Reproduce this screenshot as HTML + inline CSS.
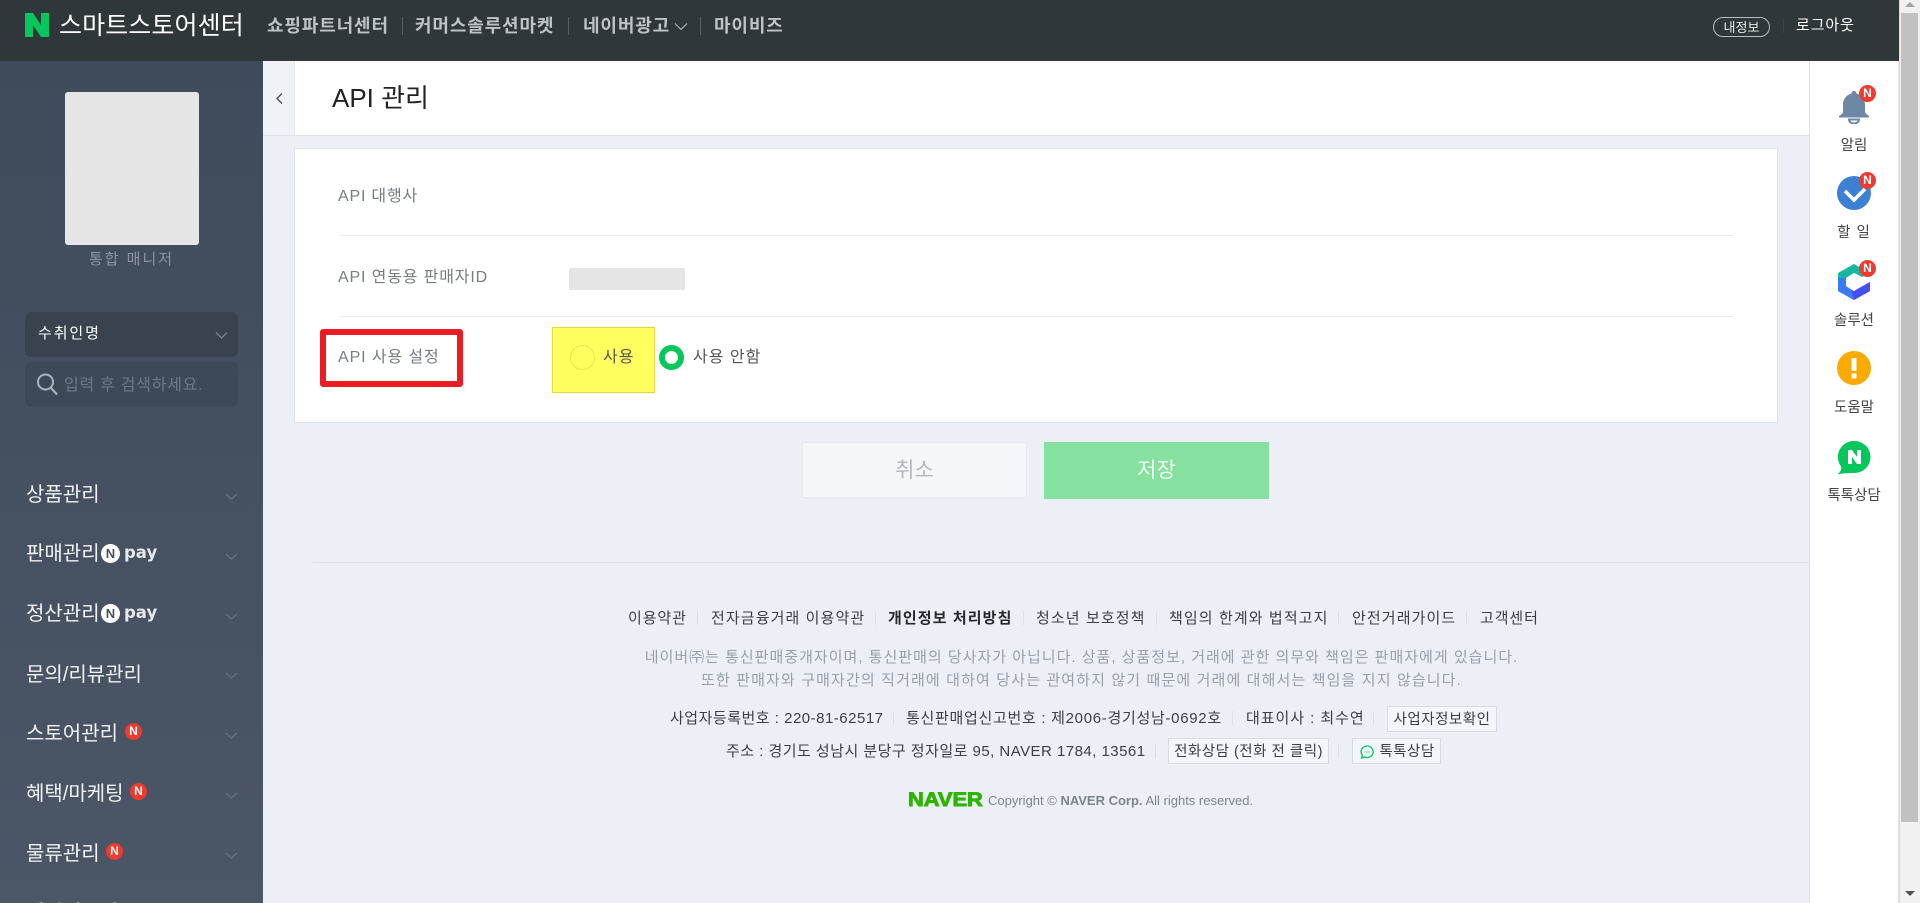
<!DOCTYPE html>
<html lang="ko"><head><meta charset="utf-8"><title>API 관리</title>
<style>
html,body{margin:0;padding:0;width:1920px;height:903px;overflow:hidden;background:#ecf0f6}
body{position:relative;font-family:"Liberation Sans","Noto Sans CJK KR",sans-serif}
.a,.t,svg{position:absolute}
.t{white-space:nowrap;line-height:0;height:0}
.c{text-align:center}
.nav{font-size:18px;font-weight:700;color:#bfc3c7;letter-spacing:.85px;top:26px}
.sep{position:absolute;width:1px}
.m{left:26px;font-size:20px;color:#fff;opacity:.93}
.d{left:0;width:263px;height:1px;background:#5a6576}
.lb{left:338px;font-size:16px;color:#777c82}
.f{font-size:15px;color:#3c4046;letter-spacing:1.1px;top:619px}
.n{font-size:15px;color:#989fa9;left:313px;width:1537px;text-align:center}
.fs{height:14px;background:#dde1e7}
.fb{position:absolute;box-sizing:border-box;background:#f2f5f9;border:1px solid #d8dce2;height:26px;font-size:14.5px;color:#3c4046;line-height:26px;text-align:center;white-space:nowrap;letter-spacing:.5px}
.r{font-size:14.5px;color:#444;width:90px;left:1809px;text-align:center}
.badge{position:absolute;width:17px;height:17px;border-radius:50%;background:#f0392f;color:#fff;font:bold 12px/17px "Liberation Sans",sans-serif;text-align:center}
</style></head><body>

<!-- header -->
<div class="a" style="left:0;top:0;width:1899px;height:61px;background:#2f373b"></div>
<svg style="left:25px;top:13px" width="24" height="24" viewBox="0 0 24 24"><path d="M0 0h8l8 12V0h8v24h-8L8 12v12H0z" fill="#03c75a"/></svg>
<div class="t" style="left:59px;top:26px;font-size:25px;letter-spacing:.1px;color:#fff">스마트스토어센터</div>
<div class="t nav" style="left:267px">쇼핑파트너센터</div>
<div class="sep" style="left:402px;top:17px;height:18px;background:#596064"></div>
<div class="t nav" style="left:415px">커머스솔루션마켓</div>
<div class="sep" style="left:568px;top:17px;height:18px;background:#596064"></div>
<div class="t nav" style="left:583px">네이버광고</div>
<svg style="left:674px;top:22px" width="14" height="9" viewBox="0 0 14 9"><path d="M1 1.500l6 6 6-6" fill="none" stroke="#b5b9bd" stroke-width="1.100"/></svg>
<div class="sep" style="left:700px;top:17px;height:18px;background:#596064"></div>
<div class="t nav" style="left:714px">마이비즈</div>
<div class="a" style="left:1713px;top:17px;width:57px;height:20px;box-sizing:border-box;border:1px solid #b9bdc0;border-radius:10px;color:#e8eaeb;font-size:13px;line-height:19px;text-align:center">내정보</div>
<div class="sep" style="left:1783px;top:19px;height:14px;background:#3d4448"></div>
<div class="t" style="left:1796px;top:26px;font-size:15px;letter-spacing:.9px;color:#fff">로그아웃</div>

<!-- scrollbar -->
<div class="a" style="left:1899px;top:0;width:21px;height:903px;background:#f1f1f1;border-left:1px solid #dcdcdc;box-sizing:border-box"></div>
<div class="a" style="left:1901px;top:13px;width:17px;height:809px;background:#c1c1c1"></div>
<svg style="left:1904px;top:0" width="12" height="9" viewBox="0 0 12 9"><path d="M6 2l5 5H1z" fill="#a3a3a3"/></svg>
<svg style="left:1904px;top:889px" width="12" height="9" viewBox="0 0 12 9"><path d="M1 2h10L6 7z" fill="#505050"/></svg>

<!-- sidebar -->
<div class="a" style="left:0;top:61px;width:263px;height:842px;background:linear-gradient(#3f4b5b,#4b5666)"></div>
<div class="a" style="left:65px;top:92px;width:134px;height:153px;background:#e5e5e5;border-radius:3px"></div>
<div class="t c" style="left:0;width:263px;top:260px;font-size:15px;letter-spacing:2px;color:#8c95a1">통합 매니저</div>
<div class="a" style="left:25px;top:312px;width:213px;height:45px;background:#394350;border-radius:6px"></div>
<div class="t" style="left:38px;top:334px;font-size:15px;letter-spacing:1.9px;color:#fff">수취인명</div>
<svg style="left:215px;top:331px" width="13" height="9" viewBox="0 0 13 9"><path d="M1 1.500l5.500 5.500 5.500-5.500" fill="none" stroke="#7a8492" stroke-width="1.300"/></svg>
<div class="a" style="left:25px;top:362px;width:213px;height:45px;background:#3e4958;border-radius:6px"></div>
<svg style="left:36px;top:372px" width="22" height="24" viewBox="0 0 22 24"><circle cx="9.500" cy="10" r="7.500" fill="none" stroke="#aab2bc" stroke-width="2"/><path d="M15 16l6 6.500" stroke="#aab2bc" stroke-width="2.200"/></svg>
<div class="t" style="left:64px;top:386px;font-size:16px;letter-spacing:.75px;color:#6e7887">입력 후 검색하세요.</div>
<div class="d" style="top:445px"></div>

<div class="t m" style="top:495px">상품관리</div>
<div class="d" style="top:524px;background:#525d6e"></div>
<div class="t m" style="top:554px">판매관리</div>
<div class="a" style="left:101px;top:544px;width:19px;height:19px;border-radius:50%;background:#fff;color:#465162;font:bold 13px/19px 'Liberation Sans',sans-serif;text-align:center">N</div>
<div class="t" style="left:124px;top:553px;font:bold 16.500px 'DejaVu Sans',sans-serif;line-height:0;color:#e6e8eb">pay</div>
<div class="d" style="top:584px;background:#525d6e"></div>
<div class="t m" style="top:614px">정산관리</div>
<div class="a" style="left:101px;top:604px;width:19px;height:19px;border-radius:50%;background:#fff;color:#465162;font:bold 13px/19px 'Liberation Sans',sans-serif;text-align:center">N</div>
<div class="t" style="left:124px;top:613px;font:bold 16.500px 'DejaVu Sans',sans-serif;line-height:0;color:#e6e8eb">pay</div>
<div class="d" style="top:704px;background:#525d6e"></div>
<div class="d" style="top:644px;background:#525d6e"></div>
<div class="t m" style="top:675px">문의/리뷰관리</div>
<div class="t m" style="top:734px">스토어관리</div>
<div class="badge" style="left:125px;top:723px">N</div>
<div class="d" style="top:763px;background:#525d6e"></div>
<div class="t m" style="top:794px">혜택/마케팅</div>
<div class="badge" style="left:130px;top:783px">N</div>
<div class="d" style="top:823px;background:#525d6e"></div>
<div class="t m" style="top:854px">물류관리</div>
<div class="badge" style="left:106px;top:843px">N</div>
<div class="d" style="top:883px;background:#525d6e"></div>
<div class="t m" style="top:913px">데이터분석</div>
<svg style="left:225px;top:491px" width="13" height="400" viewBox="0 0 13 400" fill="none" stroke="#667182" stroke-width="1.300">
<path d="M1 3l5.500 5 5.500-5M1 63l5.500 5 5.500-5M1 123l5.500 5 5.500-5M1 182l5.500 5 5.500-5M1 242l5.500 5 5.500-5M1 302l5.500 5 5.500-5M1 362l5.500 5 5.500-5"/></svg>

<!-- title bar -->
<div class="a" style="left:263px;top:61px;width:31px;height:74px;background:#eff2f7;border-right:1px solid #e4e7ec"></div>
<div class="a" style="left:295px;top:61px;width:1514px;height:74px;background:#fff"></div>
<div class="a" style="left:263px;top:135px;width:1546px;height:1px;background:#dde0e5"></div>
<svg style="left:275px;top:92px" width="9" height="13" viewBox="0 0 9 13"><path d="M7 1.500L2 6.500l5 5" fill="none" stroke="#555" stroke-width="1.500"/></svg>
<div class="t" style="left:332px;top:98px;font-size:26px;color:#222">API 관리</div>

<!-- right panel -->
<div class="a" style="left:1809px;top:61px;width:90px;height:842px;background:#fff;border-left:1px solid #dfe2e6;border-right:1px solid #dfe2e6;box-sizing:border-box"></div>
<svg style="left:1838px;top:90px" width="32" height="34" viewBox="0 0 32 34"><path d="M16 1c1.500 0 2.500 1 2.500 2.500 5.500 1.500 8.500 6 8.500 11v7c0 2 2 3 4 4.500v1.500H1v-1.500c2-1.500 4-2.500 4-4.500v-7c0-5 3-9.500 8.500-11C13.500 2 14.500 1 16 1z" fill="#6c88a4"/><path d="M11 29.500a5 4 0 0 0 10 0z" fill="none" stroke="#6c88a4" stroke-width="2"/></svg>
<div class="badge" style="left:1859px;top:85px">N</div>
<div class="t r" style="top:146px">알림</div>

<svg style="left:1837px;top:176px" width="34" height="34" viewBox="0 0 34 34"><circle cx="17" cy="17" r="17" fill="#3c80d3"/><path d="M8 15l9 9 11-11" fill="none" stroke="#fff" stroke-width="3.500"/></svg>
<div class="badge" style="left:1859px;top:172px">N</div>
<div class="t r" style="top:233px;letter-spacing:1px">할 일</div>

<svg style="left:1838px;top:264px" width="32" height="36" viewBox="0 0 32 36">
<path d="M16 0L0 9v9l8 4v-8l8-5 8 4 8-4z" fill="#16b8a2"/>
<path d="M0 14l8-0v13l8 3 0 6L0 27z" fill="#3b7bf0"/>
<path d="M8 22l8 5 16-9v9l-16 9-16-9V15z" fill="#3b7bf0"/>
<path d="M32 18v9l-16 9v0l-2-8z" fill="#4a4df0"/>
<path d="M16 9l8 4-0 1-8 5v0l7 3.500-7 4.500-8-5v-8z" fill="#fff"/></svg>
<div class="badge" style="left:1859px;top:260px">N</div>
<div class="t r" style="top:321px">솔루션</div>

<svg style="left:1837px;top:351px" width="34" height="34" viewBox="0 0 34 34"><circle cx="17" cy="17" r="17" fill="#f9ab00"/><rect x="14.500" y="7" width="5" height="13" rx="1" fill="#fff"/><rect x="14.500" y="22.500" width="5" height="5" rx="1" fill="#fff"/></svg>
<div class="t r" style="top:408px">도움말</div>

<svg style="left:1837px;top:440px" width="34" height="35" viewBox="0 0 34 35"><path d="M17.500 1a16 16 0 0 1 0 32c-5 0-9-.5-17 1.500 3-3 4.500-5.500 3.500-8A16 16 0 0 1 17.500 1z" fill="#03c75a"/><path d="M11 10h4l5 7v-7h4v14h-4l-5-7v7h-4z" fill="#fff"/></svg>
<div class="t r" style="top:496px">톡톡상담</div>

<!-- card -->
<div class="a" style="left:294px;top:148px;width:1484px;height:275px;box-sizing:border-box;background:#fff;border:1px solid #dfe3e8"></div>
<div class="t lb" style="top:197px;letter-spacing:.8px">API 대행사</div>
<div class="a" style="left:340px;top:235px;width:1393px;height:1px;background:#e8e9eb"></div>
<div class="t lb" style="top:278px;letter-spacing:.85px">API 연동용 판매자ID</div>
<div class="a" style="left:569px;top:268px;width:116px;height:22px;background:#e5e5e5;border-radius:2px"></div>
<div class="a" style="left:340px;top:316px;width:1393px;height:1px;background:#e8e9eb"></div>
<div class="a" style="left:320px;top:329px;width:143px;height:58px;box-sizing:border-box;border:6px solid #ed1c24;border-radius:3px"></div>
<div class="t lb" style="top:358px;letter-spacing:.9px">API 사용 설정</div>
<div class="a" style="left:552px;top:327px;width:103px;height:66px;box-sizing:border-box;background:#ffff60;border:1px solid #e8d83c"></div>
<div class="a" style="left:570px;top:345px;width:25px;height:25px;box-sizing:border-box;border:1px solid #e6e650;border-radius:50%"></div>
<div class="t" style="left:603px;top:358px;font-size:16px;letter-spacing:1px;color:#555">사용</div>
<div class="a" style="left:659px;top:345px;width:25px;height:25px;box-sizing:border-box;border:6.500px solid #03c75a;border-radius:50%;background:#fff"></div>
<div class="t" style="left:693px;top:358px;font-size:16px;letter-spacing:1px;color:#555">사용 안함</div>

<!-- buttons -->
<div class="a" style="left:802px;top:442px;width:225px;height:56px;box-sizing:border-box;background:#f4f6fa;border:1px solid #e6e9ee;color:#b4b8bd;font-size:21px;line-height:55px;text-align:center">취소</div>
<div class="a" style="left:1044px;top:442px;width:225px;height:57px;background:#86e09f;color:#f2fbf4;font-size:21px;line-height:57px;text-align:center">저장</div>

<!-- footer -->
<div class="a" style="left:313px;top:562px;width:1496px;height:1px;background:#dfe2e7"></div>
<div class="t f" style="left:628px;letter-spacing:.9px">이용약관</div>
<div class="sep fs" style="left:697px;top:611px"></div>
<div class="t f" style="left:711px">전자금융거래 이용약관</div>
<div class="sep fs" style="left:875px;top:611px"></div>
<div class="t f" style="left:888px;font-weight:700;color:#25282c">개인정보 처리방침</div>
<div class="sep fs" style="left:1023px;top:611px"></div>
<div class="t f" style="left:1036px">청소년 보호정책</div>
<div class="sep fs" style="left:1156px;top:611px"></div>
<div class="t f" style="left:1169px">책임의 한계와 법적고지</div>
<div class="sep fs" style="left:1338px;top:611px"></div>
<div class="t f" style="left:1352px">안전거래가이드</div>
<div class="sep fs" style="left:1466px;top:611px"></div>
<div class="t f" style="left:1480px;letter-spacing:.9px">고객센터</div>

<div class="t n" style="top:658px;letter-spacing:1px">네이버㈜는 통신판매중개자이며, 통신판매의 당사자가 아닙니다. 상품, 상품정보, 거래에 관한 의무와 책임은 판매자에게 있습니다.</div>
<div class="t n" style="top:681px;letter-spacing:1.13px">또한 판매자와 구매자간의 직거래에 대하여 당사는 관여하지 않기 때문에 거래에 대해서는 책임을 지지 않습니다.</div>

<div class="t f" style="left:670px;top:719px;letter-spacing:.5px">사업자등록번호 : 220-81-62517</div>
<div class="sep fs" style="left:893px;top:711px"></div>
<div class="t f" style="left:906px;top:719px;letter-spacing:.7px">통신판매업신고번호 : 제2006-경기성남-0692호</div>
<div class="sep fs" style="left:1232px;top:711px"></div>
<div class="t f" style="left:1246px;top:719px;letter-spacing:.95px">대표이사 : 최수연</div>
<div class="sep fs" style="left:1373px;top:711px"></div>
<div class="fb" style="left:1387px;top:706px;width:110px">사업자정보확인</div>

<div class="t f" style="left:726px;top:752px;letter-spacing:.47px">주소 : 경기도 성남시 분당구 정자일로 95, NAVER 1784, 13561</div>
<div class="sep fs" style="left:1155px;top:744px"></div>
<div class="fb" style="left:1168px;top:738px;width:161px">전화상담 (전화 전 클릭)</div>
<div class="sep fs" style="left:1338px;top:744px"></div>
<div class="fb" style="left:1352px;top:738px;width:89px;padding-left:21px">톡톡상담</div>
<svg style="left:1360px;top:745px" width="14" height="14" viewBox="0 0 14 14"><path d="M7 1a6 5.800 0 1 1-2.500 11L1.500 13l.8-2.800A6 5.800 0 0 1 7 1z" fill="none" stroke="#03c75a" stroke-width="1.300"/><path d="M4.500 7h1M6.500 7h1M8.500 7h1" stroke="#03c75a" stroke-width="1"/></svg>

<div class="t" style="left:908px;top:800px;font:900 19.500px 'Liberation Sans',sans-serif;line-height:0;color:#2db400;-webkit-text-stroke:.9px #2db400;transform:scaleX(1.12);transform-origin:0 0">NAVER</div>
<div class="t" style="left:988px;top:801px;font-size:13px;color:#7d848d">Copyright © <b>NAVER Corp.</b> All rights reserved.</div>
</body></html>
